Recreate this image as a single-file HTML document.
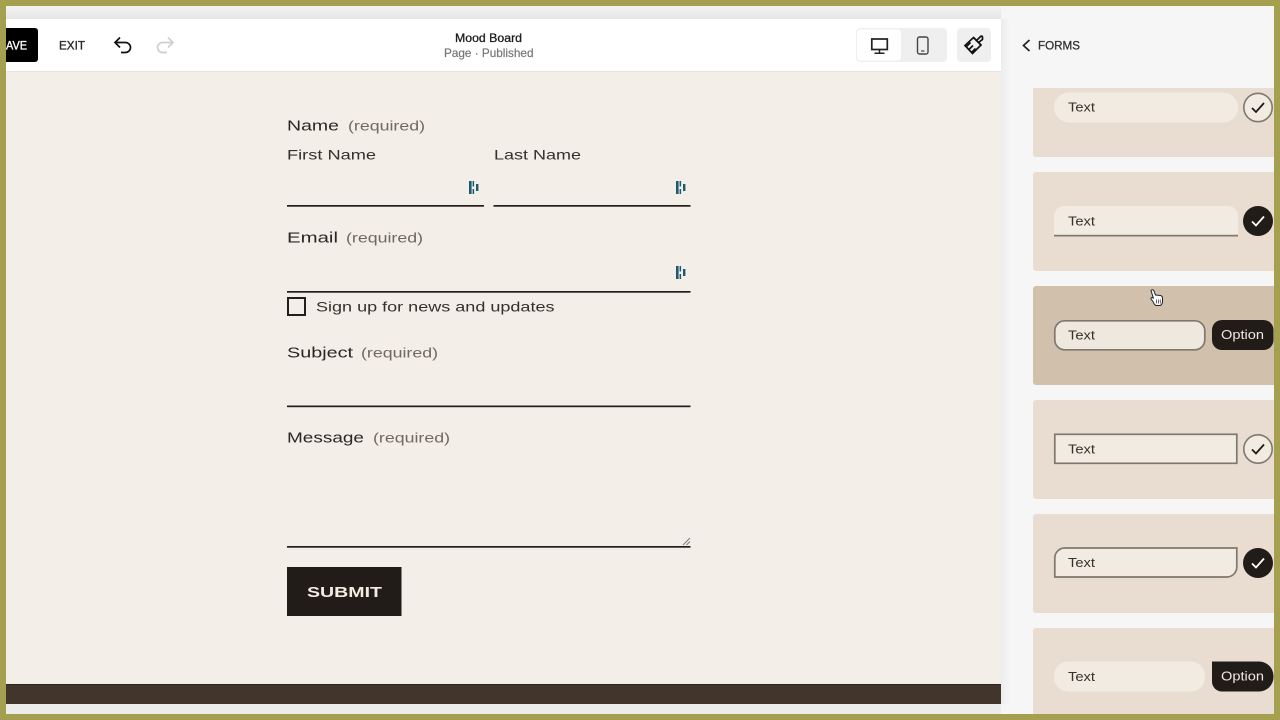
<!DOCTYPE html>
<html><head><meta charset="utf-8"><title>Mood Board</title>
<style>
html,body{margin:0;padding:0;width:1280px;height:720px;overflow:hidden;background:#f6f6f6}
svg{display:block}
text{font-family:"Liberation Sans",sans-serif;white-space:pre}
.soft{filter:blur(.3px)}
.l{font-size:15px;fill:#2b2622}
.r{font-size:14px;fill:#6f6962}
.s{font-size:14px;fill:#35302b}
.t{font-size:12.5px;fill:#36312c}
.o{font-size:12.5px;fill:#efe9e0}
</style></head><body>
<svg width="1280" height="720" viewBox="0 0 1280 720" xmlns="http://www.w3.org/2000/svg">
<defs>
<linearGradient id="sh" x1="0" x2="1" y1="0" y2="0"><stop offset="0" stop-color="#ececec"/><stop offset="1" stop-color="#f6f6f6"/></linearGradient>
<linearGradient id="top" x1="0" x2="0" y1="0" y2="1"><stop offset="0" stop-color="#f2f2f2"/><stop offset="1" stop-color="#e6e6e6"/></linearGradient>
<g id="pm" fill="#1d5a70"><rect x="0" y="0" width="2.600" height="13"/><rect x="3.600" y="0" width="1.500" height="5.500"/><rect x="3.600" y="8" width="1.500" height="5"/><rect x="7" y="3" width="2.400" height="7"/></g>
<path id="ck" d="M-6 0.500L-2 4.500L6 -4.500" fill="none" stroke-width="1.800"/>
</defs>
<rect width="1280" height="720" fill="#f6f6f6"/>
<g class="soft">
<!-- editor -->
<rect x="6" y="6" width="995" height="13" fill="url(#top)"/>
<rect x="1001" y="19" width="9" height="685" fill="url(#sh)"/>
<rect x="6" y="19" width="995" height="52" fill="#fff"/>
<rect x="6" y="71" width="995" height="613" fill="#f3eee8"/>
<rect x="6" y="71" width="995" height="1" fill="#e8e4dd"/>
<rect x="6" y="684" width="995" height="20" fill="#42352b"/>
<rect x="6" y="684" width="995" height="1" fill="#2d2620"/>
<rect x="6" y="704" width="995" height="10" fill="#ececea"/>

<!-- toolbar left -->
<path d="M6 28H35a3 3 0 0 1 3 3V59a3 3 0 0 1-3 3H6Z" fill="#000"/>
<text x="6" y="49.500" font-size="12" fill="#fff" stroke="#fff" stroke-width=".35" textLength="21" lengthAdjust="spacingAndGlyphs">AVE</text>
<text x="59" y="49.500" font-size="12" fill="#2a2a2a" stroke="#2a2a2a" stroke-width=".35" textLength="26" lengthAdjust="spacingAndGlyphs">EXIT</text>
<path d="M120 39L115 44L120 49M115.500 44H125.500a5 5 0 0 1 0 10H121" transform="translate(0,-1.500)" fill="none" stroke="#111" stroke-width="1.700"/>
<path d="M168 39L173 44L168 49M172.500 44H162.500a5 5 0 0 0 0 10H167" transform="translate(0,-1.500)" fill="none" stroke="#cfcfcf" stroke-width="1.700"/>

<!-- title -->
<text x="455" y="42" font-size="12" fill="#1d1d1d" stroke="#1d1d1d" stroke-width=".3" textLength="67" lengthAdjust="spacingAndGlyphs">Mood Board</text>
<text x="444" y="57" font-size="12" fill="#777" stroke="#777" stroke-width=".2" textLength="89.500" lengthAdjust="spacingAndGlyphs">Page · Published</text>

<!-- device toggle -->
<rect x="856" y="28" width="91" height="34" rx="4" fill="#efefef"/>
<rect x="857" y="29.500" width="44" height="31" rx="3" fill="#fff"/>
<rect x="871.800" y="39" width="15.500" height="10.500" fill="none" stroke="#222" stroke-width="1.700"/>
<path d="M879.500 50V53M874.500 53.300H884.500" stroke="#222" stroke-width="1.500" fill="none"/>
<rect x="917.500" y="37" width="10.500" height="17" rx="2" fill="none" stroke="#444" stroke-width="1.400"/>
<path d="M921 51H924.500" stroke="#444" stroke-width="1.200"/>
<rect x="957" y="28" width="34" height="34" rx="4" fill="#efefef"/>
<g fill="none" stroke="#111" stroke-width="1.700">
<path d="M965 45.500L973.500 37.500L981 45L972.500 53.500Z"/>
<path d="M973.500 37.500L976.500 40.500L980.500 36.500Q982 35.500 982.500 37L982.500 39.500L978.500 42.500L981 45"/>
<path d="M969 49.500L973 45.500M972 52L975.500 48.500M966.500 46.500L970.500 42.500"/>
</g>

<!-- right panel header -->
<path d="M1029.500 40L1023.500 45.500L1029.500 51" fill="none" stroke="#222" stroke-width="1.700"/>
<text x="1038" y="49.500" font-size="12" fill="#333" stroke="#333" stroke-width=".3" textLength="42" lengthAdjust="spacingAndGlyphs">FORMS</text>

<!-- cards -->
<path d="M1033 88H1274V157H1036a3 3 0 0 1-3-3Z" fill="#e9ddd1"/>
<path d="M1036 172H1274V271H1036a3 3 0 0 1-3-3V175a3 3 0 0 1 3-3Z" fill="#e9ddd1"/>
<path d="M1036 286H1274V385H1036a3 3 0 0 1-3-3V289a3 3 0 0 1 3-3Z" fill="#d0c0ac"/>
<path d="M1036 400H1274V499H1036a3 3 0 0 1-3-3V403a3 3 0 0 1 3-3Z" fill="#e9ddd1"/>
<path d="M1036 514H1274V613H1036a3 3 0 0 1-3-3V517a3 3 0 0 1 3-3Z" fill="#e9ddd1"/>
<path d="M1036 628H1274V714H1033V631a3 3 0 0 1 3-3Z" fill="#e9ddd1"/>

<!-- card 1 -->
<rect x="1054" y="92.500" width="184" height="30" rx="15" fill="#f1ebe2"/>
<text class="t" x="1068" y="111.500" textLength="27" lengthAdjust="spacingAndGlyphs">Text</text>
<circle cx="1258" cy="107.500" r="14.200" fill="#f1ebe2" stroke="#7e786e" stroke-width="1.600"/>
<use href="#ck" x="1258" y="107.500" stroke="#1e1a16"/>

<!-- card 2 -->
<path d="M1054 236V216a10 10 0 0 1 10-10H1228a10 10 0 0 1 10 10V236Z" fill="#f1ebe2"/>
<rect x="1054" y="234.800" width="184" height="1.700" fill="#7e786e"/>
<text class="t" x="1068" y="225.500" textLength="27" lengthAdjust="spacingAndGlyphs">Text</text>
<circle cx="1258" cy="221" r="15" fill="#211c17"/>
<use href="#ck" x="1258" y="221" stroke="#fff"/>

<!-- card 3 -->
<rect x="1054.800" y="320.800" width="150" height="29" rx="10" fill="#efe8de" stroke="#7e786e" stroke-width="1.700"/>
<text class="t" x="1068" y="339.500" textLength="27" lengthAdjust="spacingAndGlyphs">Text</text>
<rect x="1212" y="320" width="61.500" height="30" rx="10" fill="#211c17"/>
<text class="o" x="1221" y="339" textLength="43" lengthAdjust="spacingAndGlyphs">Option</text>

<!-- card 4 -->
<rect x="1054.800" y="434.300" width="182" height="29" fill="#f1ebe2" stroke="#7e786e" stroke-width="1.700"/>
<text class="t" x="1068" y="453.500" textLength="27" lengthAdjust="spacingAndGlyphs">Text</text>
<circle cx="1258" cy="449" r="14.200" fill="#f1ebe2" stroke="#7e786e" stroke-width="1.600"/>
<use href="#ck" x="1258" y="449" stroke="#1e1a16"/>

<!-- card 5 -->
<path d="M1054.800 577V558a10 10 0 0 1 10-10H1236.800V567a10 10 0 0 1-10 10Z" fill="#f1ebe2" stroke="#7e786e" stroke-width="1.700"/>
<text class="t" x="1068" y="567" textLength="27" lengthAdjust="spacingAndGlyphs">Text</text>
<circle cx="1258" cy="563" r="15" fill="#211c17"/>
<use href="#ck" x="1258" y="563" stroke="#fff"/>

<!-- card 6 -->
<rect x="1054" y="661.500" width="151" height="30" rx="14" fill="#f1ebe2"/>
<text class="t" x="1068" y="681" textLength="27" lengthAdjust="spacingAndGlyphs">Text</text>
<path d="M1212 661.500H1259a14.500 14.500 0 0 1 14.500 14.500V677a14.500 14.500 0 0 1-14.500 14.500H1222a10 10 0 0 1-10-10Z" fill="#211c17"/>
<text class="o" x="1221" y="680.500" textLength="43" lengthAdjust="spacingAndGlyphs">Option</text>

<!-- cursor -->
<g transform="translate(1150,289)">
<path d="M1 1.500Q2.500 0 3.800 1.500L5.500 6L10.500 6.500Q12.500 7 12.500 9.500V13Q12 16 10 16.500H6Q4 15.500 3 12.500L1 10Q.5 8.500 2.500 8.500L3.500 9.500Z" fill="#fff" stroke="#222" stroke-width="1"/>
<path d="M6.500 10.500V14.500M8.400 10.500V14.500M10.300 10.500V14.500" stroke="#444" stroke-width=".8"/>
</g>

<!-- form -->
<text class="l" x="287" y="130.500" textLength="52" lengthAdjust="spacingAndGlyphs">Name</text>
<text class="r" x="348" y="130.500" textLength="77" lengthAdjust="spacingAndGlyphs">(required)</text>
<text class="s" x="287" y="159.500" textLength="89" lengthAdjust="spacingAndGlyphs">First Name</text>
<text class="s" x="494" y="159.500" textLength="87" lengthAdjust="spacingAndGlyphs">Last Name</text>
<use href="#pm" x="469" y="181"/>
<use href="#pm" x="676" y="181"/>
<rect x="287" y="205" width="197" height="1.700" fill="#231e1a"/>
<rect x="493.500" y="205" width="197" height="1.700" fill="#231e1a"/>

<text class="l" x="287" y="242.500" textLength="51" lengthAdjust="spacingAndGlyphs">Email</text>
<text class="r" x="346" y="242.500" textLength="77" lengthAdjust="spacingAndGlyphs">(required)</text>
<use href="#pm" x="676" y="266"/>
<rect x="287" y="291" width="403.500" height="1.700" fill="#231e1a"/>

<rect x="288" y="298" width="17" height="17" fill="none" stroke="#231e1a" stroke-width="2"/>
<text class="s" x="316" y="311.500" textLength="238.500" lengthAdjust="spacingAndGlyphs">Sign up for news and updates</text>

<text class="l" x="287" y="357.500" textLength="66" lengthAdjust="spacingAndGlyphs">Subject</text>
<text class="r" x="361" y="357.500" textLength="77" lengthAdjust="spacingAndGlyphs">(required)</text>
<rect x="287" y="405.500" width="403.500" height="1.700" fill="#231e1a"/>

<text class="l" x="287" y="442.500" textLength="77" lengthAdjust="spacingAndGlyphs">Message</text>
<text class="r" x="373" y="442.500" textLength="77" lengthAdjust="spacingAndGlyphs">(required)</text>
<path d="M683 545L690 538M686.500 545L690 541.500" stroke="#777" stroke-width=".9"/>
<rect x="287" y="546" width="403.500" height="1.700" fill="#231e1a"/>

<rect x="287" y="567" width="114.500" height="49" fill="#211c17"/>
<text x="307" y="597" font-size="15" font-weight="700" fill="#f1ebe2" textLength="75" lengthAdjust="spacingAndGlyphs">SUBMIT</text>
</g>
<!-- frame -->
<rect x="0" y="0" width="1280" height="6" fill="#a4a04f"/>
<rect x="0" y="714" width="1280" height="6" fill="#a4a04f"/>
<rect x="0" y="0" width="6" height="720" fill="#a4a04f"/>
<rect x="1274" y="0" width="6" height="720" fill="#a4a04f"/>
</svg>
</body></html>
